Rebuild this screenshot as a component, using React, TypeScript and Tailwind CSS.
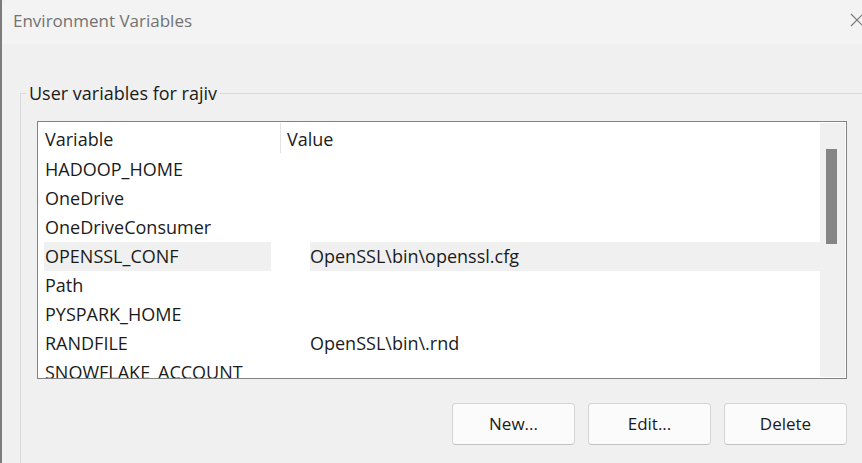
import React from 'react';

const rows: { name: string; value?: string; selected?: boolean }[] = [
  { name: 'HADOOP_HOME' },
  { name: 'OneDrive' },
  { name: 'OneDriveConsumer' },
  { name: 'OPENSSL_CONF', value: 'OpenSSL\\bin\\openssl.cfg', selected: true },
  { name: 'Path' },
  { name: 'PYSPARK_HOME' },
  { name: 'RANDFILE', value: 'OpenSSL\\bin\\.rnd' },
  { name: 'SNOWFLAKE_ACCOUNT' },
];

function CloseIcon() {
  return (
    <svg width="14" height="14" viewBox="0 0 14 14" className="shrink-0">
      <path d="M1 1 L13 13 M13 1 L1 13" stroke="#7a7a7a" strokeWidth="1.2" fill="none" />
    </svg>
  );
}

export default function App() {
  return (
    <div className="w-[862px] h-[463px] flex overflow-hidden bg-[#f0f0f0] font-['Open_Sans',sans-serif] text-[18px] text-[#1b1b1b]">
      {/* window behind */}
      <div className="w-[2px] bg-[#7c7c7c]" />

      <div className="flex-1 flex flex-col rounded-tl-[6px] overflow-hidden">
        {/* Title bar */}
        <div className="h-[44px] shrink-0 bg-[#f3f3f3] flex items-center justify-between pl-[11px] pr-0">
          <span className="text-[17px] text-[#727272] leading-none -mt-[4px]">Environment Variables</span>
          <div className="-mr-[2px] -mt-[4px]">
            <CloseIcon />
          </div>
        </div>

        {/* Body */}
        <div className="flex-1 min-h-0 pt-[38px] pl-[18px]">
          <fieldset className="border-t border-l border-[#d9d9d9] h-[381px] pl-[16px]">
            <legend className="-ml-[11px] px-[3px] leading-[22px]">User variables for rajiv</legend>

            {/* List box */}
            <div className="mt-[17px] w-[810px] h-[258px] border border-[#838383] bg-white flex overflow-hidden">
              <div className="flex-1 overflow-hidden">
                {/* Header */}
                <div className="h-[33px] flex items-start pt-[4px]">
                  <div className="w-[242px] pl-[7px] leading-[26px]">Variable</div>
                  <div className="w-px h-[30px] -mt-[3px] bg-[#e3e3e3]" />
                  <div className="pl-[6px] leading-[26px]">Value</div>
                </div>
                {rows.map((r) => (
                  <div key={r.name} className="h-[29px] flex items-center">
                    <div className="w-[243px] h-full pl-[6px]">
                      <div
                        className={`h-full w-[227px] flex items-center pl-[1px] ${r.selected ? 'bg-[#f0f0f0]' : ''}`}
                      >
                        {r.name}
                      </div>
                    </div>
                    <div className="flex-1 h-full pl-[29px]">
                      {r.value && (
                        <div className={`h-full flex items-center ${r.selected ? 'bg-[#f0f0f0]' : ''}`}>
                          {r.value}
                        </div>
                      )}
                    </div>
                  </div>
                ))}
              </div>

              {/* Scrollbar */}
              <div className="w-[25px] my-[1px] mr-[1px] bg-[#f0f0f0] flex justify-center pt-[26px]">
                <div className="w-[11px] h-[95px] bg-[#858585] -ml-[3px]" />
              </div>
            </div>

            {/* Buttons */}
            <div className="mt-[24px] w-[810px] flex justify-end gap-[13px]">
              {['New...', 'Edit...', 'Delete'].map((b) => (
                <button
                  key={b}
                  className="w-[123px] h-[42px] rounded-[4px] bg-[#fbfbfb] border border-[#d5d5d5] border-b-[#c2c2c2] text-[17px] text-[#1b1b1b]"
                >
                  {b}
                </button>
              ))}
            </div>
          </fieldset>
        </div>
      </div>
    </div>
  );
}
